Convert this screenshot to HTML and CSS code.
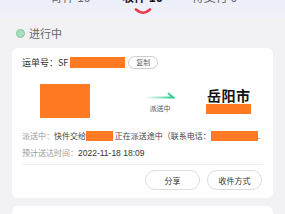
FILE: index.html
```html
<!DOCTYPE html>
<html>
<head>
<meta charset="utf-8">
<link rel="stylesheet" href="styles.css">
</head>
<body>
<div class="page">
  <div class="header">
    <div class="tabs">
      <div class="tab">寄件 10</div>
      <div class="tab active">收件 10
        <svg class="smile" width="18" height="7" viewBox="0 0 18 7"><path d="M2 1.5 Q9 8 16 1.5" fill="none" stroke="#e8384a" stroke-width="2.6" stroke-linecap="round"/></svg>
      </div>
      <div class="tab">待支付 0</div>
    </div>
  </div>
  <div class="status">
    <span class="dot"></span>
    <span class="status-text">进行中</span>
  </div>
  <div class="card">
    <div class="row-no">
      <span class="label-dark">运单号：SF</span>
      <span class="redact r-no"></span>
      <span class="copy">复制</span>
    </div>
    <div class="route">
      <div class="from"><span class="redact r-from"></span></div>
      <div class="mid">
        <svg width="30" height="8" viewBox="0 0 30 8">
          <defs><linearGradient id="g" x1="0" x2="1" y1="0" y2="0"><stop offset="0" stop-color="#3ccf8e" stop-opacity="0"/><stop offset="1" stop-color="#2dc98a"/></linearGradient></defs>
          <path d="M0 5.5 H28 L23 1" fill="none" stroke="url(#g)" stroke-width="2.2"/>
        </svg>
        <span class="mid-text">派送中</span>
      </div>
      <div class="to">
        <span class="city">岳阳市</span>
        <span class="redact r-to"></span>
      </div>
    </div>
    <div class="info">
      <span class="muted">派送中：</span><span class="dark">快件交给</span><span class="redact r-a"></span><span class="dark">&nbsp;正在派送途中（联系电话：</span><span class="redact r-b"></span><span class="dark">.</span>
    </div>
    <div class="info eta">
      <span class="muted">预计送达时间：</span><span class="date">2022-11-18 18:09</span>
    </div>
    <div class="divider"></div>
    <div class="actions">
      <span class="btn">分享</span>
      <span class="btn">收件方式</span>
    </div>
  </div>
  <div class="card next"></div>
</div>
</body>
</html>
```

FILE: styles.css
```css
html, body {
  margin: 0;
  padding: 0;
}
body {
  width: 285px;
  height: 214px;
  overflow: hidden;
  background: #f2f2f4;
  font-family: "Noto Sans CJK SC", "Liberation Sans", sans-serif;
}
.page {
  display: flex;
  flex-direction: column;
}
.header {
  height: 18px;
  background: linear-gradient(180deg, #eceef9 0%, #f0f1f8 100%);
  overflow: hidden;
}
.tabs {
  display: flex;
  justify-content: center;
  margin-top: -11px;
  height: 29px;
}
.tab {
  width: 72px;
  text-align: center;
  font-size: 12px;
  line-height: 16px;
  color: #666;
  display: flex;
  flex-direction: column;
  align-items: center;
}
.tab.active {
  color: #111;
  font-weight: 700;
}
.smile {
  display: block;
  margin-top: 3px;
}
.status {
  display: flex;
  align-items: center;
  height: 30px;
  padding-left: 16px;
  gap: 4px;
}
.dot {
  width: 7px;
  height: 7px;
  border-radius: 50%;
  background: #a9dfc0;
  border: 1px solid #7ccaa0;
}
.status-text {
  font-size: 11px;
  color: #666;
}
.card {
  margin: 0 12px;
  background: #fff;
  border-radius: 6px;
  padding: 0 10px;
}
.row-no {
  display: flex;
  align-items: center;
  height: 26px;
  padding-top: 1px;
  font-size: 9px;
  color: #333;
}
.redact {
  display: inline-block;
  background: #ff7a22;
}
.r-no {
  width: 55px;
  height: 11px;
  margin-left: 2px;
}
.copy {
  margin-left: 3px;
  border: 1px solid #ccc;
  border-radius: 7px;
  font-size: 7px;
  color: #666;
  padding: 0 7px;
  line-height: 11px;
}
.route {
  display: flex;
  align-items: flex-start;
  height: 52px;
}
.from {
  width: 100px;
  padding-top: 9px;
  padding-left: 18px;
}
.r-from {
  width: 50px;
  height: 34px;
}
.mid {
  display: flex;
  flex-direction: column;
  align-items: center;
  width: 40px;
  padding-top: 17px;
}
.mid-text {
  font-size: 7px;
  color: #555;
  line-height: 10px;
  margin-top: 3px;
}
.to {
  display: flex;
  flex-direction: column;
  align-items: flex-start;
  padding-left: 27px;
  padding-top: 12px;
}
.city {
  font-size: 14px;
  font-weight: 700;
  color: #111;
  line-height: 16px;
  letter-spacing: 0.5px;
}
.r-to {
  width: 45px;
  height: 10px;
  margin-top: 1px;
  margin-left: -1px;
}
.info {
  display: flex;
  align-items: center;
  font-size: 8px;
  height: 17px;
  white-space: nowrap;
}
.muted {
  color: #999;
}
.dark {
  color: #444;
}
.r-a {
  width: 27px;
  height: 10px;
}
.r-b {
  width: 47px;
  height: 10px;
}
.eta .date {
  color: #333;
  font-family: "Liberation Sans", sans-serif;
  font-size: 8.5px;
}
.divider {
  height: 1px;
  background: #eee;
  margin-top: 3px;
}
.actions {
  display: flex;
  justify-content: flex-end;
  gap: 7px;
  padding: 5px 1px 8px 0;
}
.btn {
  width: 53px;
  height: 18px;
  border: 1px solid #ddd;
  border-radius: 10px;
  display: flex;
  align-items: center;
  justify-content: center;
  font-size: 8px;
  color: #333;
}
.card.next {
  margin-top: 8px;
  height: 20px;
}
```
